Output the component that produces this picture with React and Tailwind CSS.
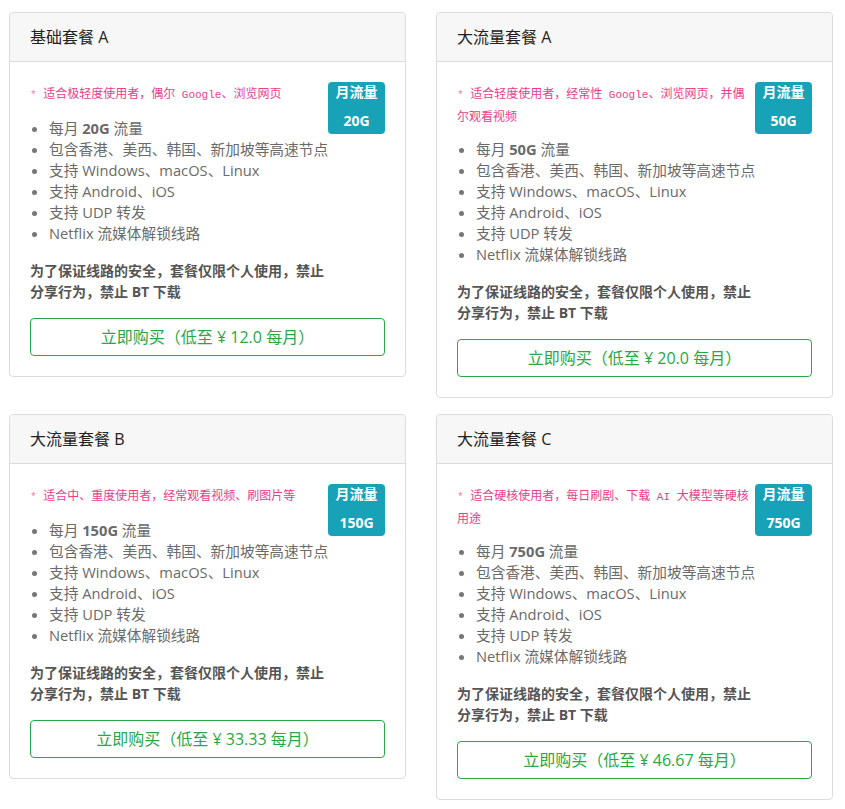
const plans = [
  {
    title: "基础套餐 A",
    note: [["t", "适合极轻度使用者，偶尔"], ["m", " Google"], ["t", "、浏览网页"]],
    traffic: "20G",
    price: "12.0",
  },
  {
    title: "大流量套餐 A",
    note: [["t", "适合轻度使用者，经常性"], ["m", " Google"], ["t", "、浏览网页，并偶尔观看视频"]],
    traffic: "50G",
    price: "20.0",
  },
  {
    title: "大流量套餐 B",
    note: [["t", "适合中、重度使用者，经常观看视频、刷图片等"]],
    traffic: "150G",
    price: "33.33",
  },
  {
    title: "大流量套餐 C",
    note: [["t", "适合硬核使用者，每日刷剧、下载"], ["m", " AI "], ["t", "大模型等硬核用途"]],
    traffic: "750G",
    price: "46.67",
  },
];

const mono = "font-['Liberation_Mono','DejaVu_Sans_Mono',monospace] text-[11px] whitespace-pre";

const PlanCard = ({ plan }) => {
  return (
    <div className="rounded-[4px] border border-[#dcdcdc] bg-white">
      <div className="border-b border-[#dcdcdc] bg-[#f7f7f7] px-5 py-3 rounded-t-[4px] text-[16px] leading-6 text-[#222]">
        {plan.title}
      </div>
      <div className="px-5 pt-5 pb-5">
        <div className="float-right ml-[3px] flex w-[57px] flex-col items-center rounded-[4px] bg-[#17a2b8] pb-[3px] text-[14px] font-bold leading-[20px] text-white">
          <span>月流量</span>
          <span className="mt-[9px]">{plan.traffic}</span>
        </div>
        <p className="mb-3 pt-[1px] text-[12px] leading-[21px] text-[#e83e8c]">
          <span className={mono + " text-[#f07aae]"}>* </span>
          {plan.note.map(([kind, text], i) =>
            kind === "m" ? (
              <span key={i} className={mono}>
                {text}
              </span>
            ) : (
              <span key={i}>{text}</span>
            )
          )}
        </p>
        <ul className="mb-4 list-disc pl-[19px] text-[14.7px] leading-[21px] text-[#6a6a6a] marker:text-[#777]">
          <li>
            每月 <b>{plan.traffic}</b> 流量
          </li>
          <li>包含香港、美西、韩国、新加坡等高速节点</li>
          <li>支持 Windows、macOS、Linux</li>
          <li>支持 Android、iOS</li>
          <li>支持 UDP 转发</li>
          <li>Netflix 流媒体解锁线路</li>
        </ul>
        <p className="text-[14px] font-bold leading-[21px] text-[#555]">
          为了保证线路的安全，套餐仅限个人使用，禁止
          <br />
          分享行为，禁止 BT 下载
        </p>
        <button className="mt-4 block w-full rounded-[4px] border border-[#28a745] bg-white py-[6px] text-[16px] leading-6 text-[#28a745]">
          立即购买（低至 ¥ {plan.price} 每月）
        </button>
      </div>
    </div>
  );
};

export default function App() {
  return (
    <div className="min-h-screen bg-white font-['Open_Sans','Noto_Sans_CJK_SC',sans-serif]">
      <div className="grid grid-cols-[397px_397px] items-start gap-x-[30px] gap-y-4 pl-[9px] pt-[12px]">
        {plans.map((p) => (
          <PlanCard key={p.title} plan={p} />
        ))}
      </div>
    </div>
  );
}
